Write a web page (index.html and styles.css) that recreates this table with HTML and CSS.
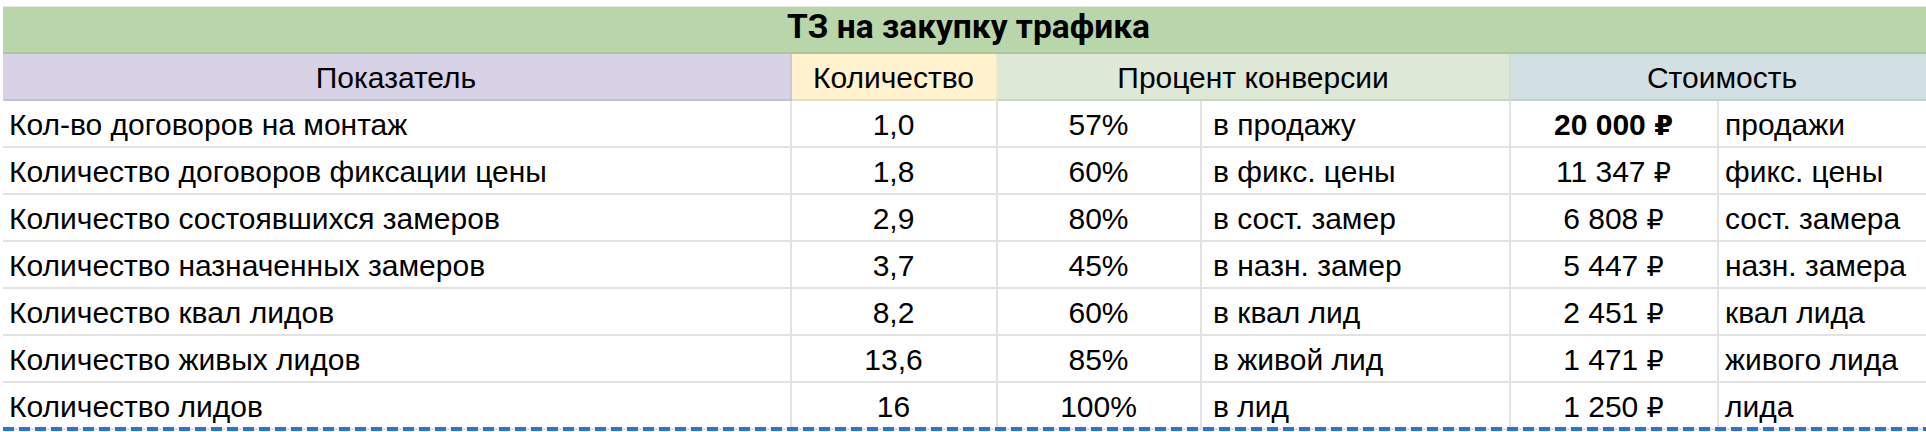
FILE: index.html
```html
<!DOCTYPE html>
<html lang="ru">
<head>
<meta charset="utf-8">
<title>ТЗ на закупку трафика</title>
<link rel="stylesheet" href="styles.css">
</head>
<body>
<div class="sheet">
  <div class="grid">
    <div class="cell title">ТЗ на закупку трафика</div>

    <div class="cell head h-name">Показатель</div>
    <div class="cell head h-qty">Количество</div>
    <div class="cell head h-conv span2">Процент конверсии</div>
    <div class="cell head h-cost span2 last">Стоимость</div>

    <div class="cell left">Кол-во договоров на монтаж</div>
    <div class="cell center">1,0</div>
    <div class="cell center">57%</div>
    <div class="cell left pad4">в продажу</div>
    <div class="cell center bold"><span>20 000&nbsp;<span class="rub">₽</span></span></div>
    <div class="cell left last">продажи</div>

    <div class="cell left">Количество договоров фиксации цены</div>
    <div class="cell center">1,8</div>
    <div class="cell center">60%</div>
    <div class="cell left pad4">в фикс. цены</div>
    <div class="cell center"><span>11 347&nbsp;<span class="rub">₽</span></span></div>
    <div class="cell left last">фикс. цены</div>

    <div class="cell left">Количество состоявшихся замеров</div>
    <div class="cell center">2,9</div>
    <div class="cell center">80%</div>
    <div class="cell left pad4">в сост. замер</div>
    <div class="cell center"><span>6 808&nbsp;<span class="rub">₽</span></span></div>
    <div class="cell left last">сост. замера</div>

    <div class="cell left">Количество назначенных замеров</div>
    <div class="cell center">3,7</div>
    <div class="cell center">45%</div>
    <div class="cell left pad4">в назн. замер</div>
    <div class="cell center"><span>5 447&nbsp;<span class="rub">₽</span></span></div>
    <div class="cell left last">назн. замера</div>

    <div class="cell left">Количество квал лидов</div>
    <div class="cell center">8,2</div>
    <div class="cell center">60%</div>
    <div class="cell left pad4">в квал лид</div>
    <div class="cell center"><span>2 451&nbsp;<span class="rub">₽</span></span></div>
    <div class="cell left last">квал лида</div>

    <div class="cell left">Количество живых лидов</div>
    <div class="cell center">13,6</div>
    <div class="cell center">85%</div>
    <div class="cell left pad4">в живой лид</div>
    <div class="cell center"><span>1 471&nbsp;<span class="rub">₽</span></span></div>
    <div class="cell left last">живого лида</div>

    <div class="cell left">Количество лидов</div>
    <div class="cell center">16</div>
    <div class="cell center">100%</div>
    <div class="cell left pad4">в лид</div>
    <div class="cell center"><span>1 250&nbsp;<span class="rub">₽</span></span></div>
    <div class="cell left last">лида</div>
  </div>
  <div class="marching"></div>
</div>
</body>
</html>
```

FILE: styles.css
```css
html, body {
  margin: 0;
  padding: 0;
  background: #ffffff;
  overflow: hidden;
}

.sheet {
  width: 1940px;
  padding: 6px 0 0 3px;
  font-family: "Liberation Sans", Arial, sans-serif;
  font-size: 30px;
  color: #000000;
}

.grid {
  display: grid;
  grid-template-columns: 789px 206px 204px 309px 208px 222px;
  grid-auto-rows: 47px;
  border-top: 1px solid #e6e6e6;
}

.cell {
  box-sizing: border-box;
  display: flex;
  align-items: center;
  padding: 3px 7px 0 6px;
  border-right: 2px solid #e2e2e2;
  border-bottom: 2px solid #e2e2e2;
  white-space: nowrap;
  overflow: hidden;
  line-height: 1;
}

.cell.last {
  border-right: none;
}

.left {
  justify-content: flex-start;
}

.pad4 {
  padding-left: 11px;
}

.center {
  justify-content: center;
}

.bold {
  font-weight: 700;
}

.rub {
  font-family: "DejaVu Sans", sans-serif;
  font-size: 27px;
}

.title {
  grid-column: 1 / -1;
  justify-content: center;
  background: #b8d6a9;
  border-right: none;
  border-bottom: 2px solid #a9c79b;
  font-family: Roboto, "Liberation Sans", sans-serif;
  font-weight: 700;
  font-size: 33.5px;
  padding-top: 0;
  padding-bottom: 5px;
  padding-left: 0;
}

.head {
  justify-content: center;
  border-bottom: 2px solid rgba(0, 0, 0, 0.08);
  border-right: 2px solid rgba(0, 0, 0, 0.05);
}

.span2 {
  grid-column: span 2;
}

.h-name {
  background: #d8d2e7;
}

.h-qty {
  background: #fff2cd;
}

.h-conv {
  background: #dde9d6;
}

.h-cost {
  background: #d2dfe3;
  padding-right: 14px;
}

.marching {
  height: 4px;
  margin-top: -3px;
  position: relative;
  background: repeating-linear-gradient(90deg, #2f6fe4 0 11px, transparent 11px 16px);
}
```
